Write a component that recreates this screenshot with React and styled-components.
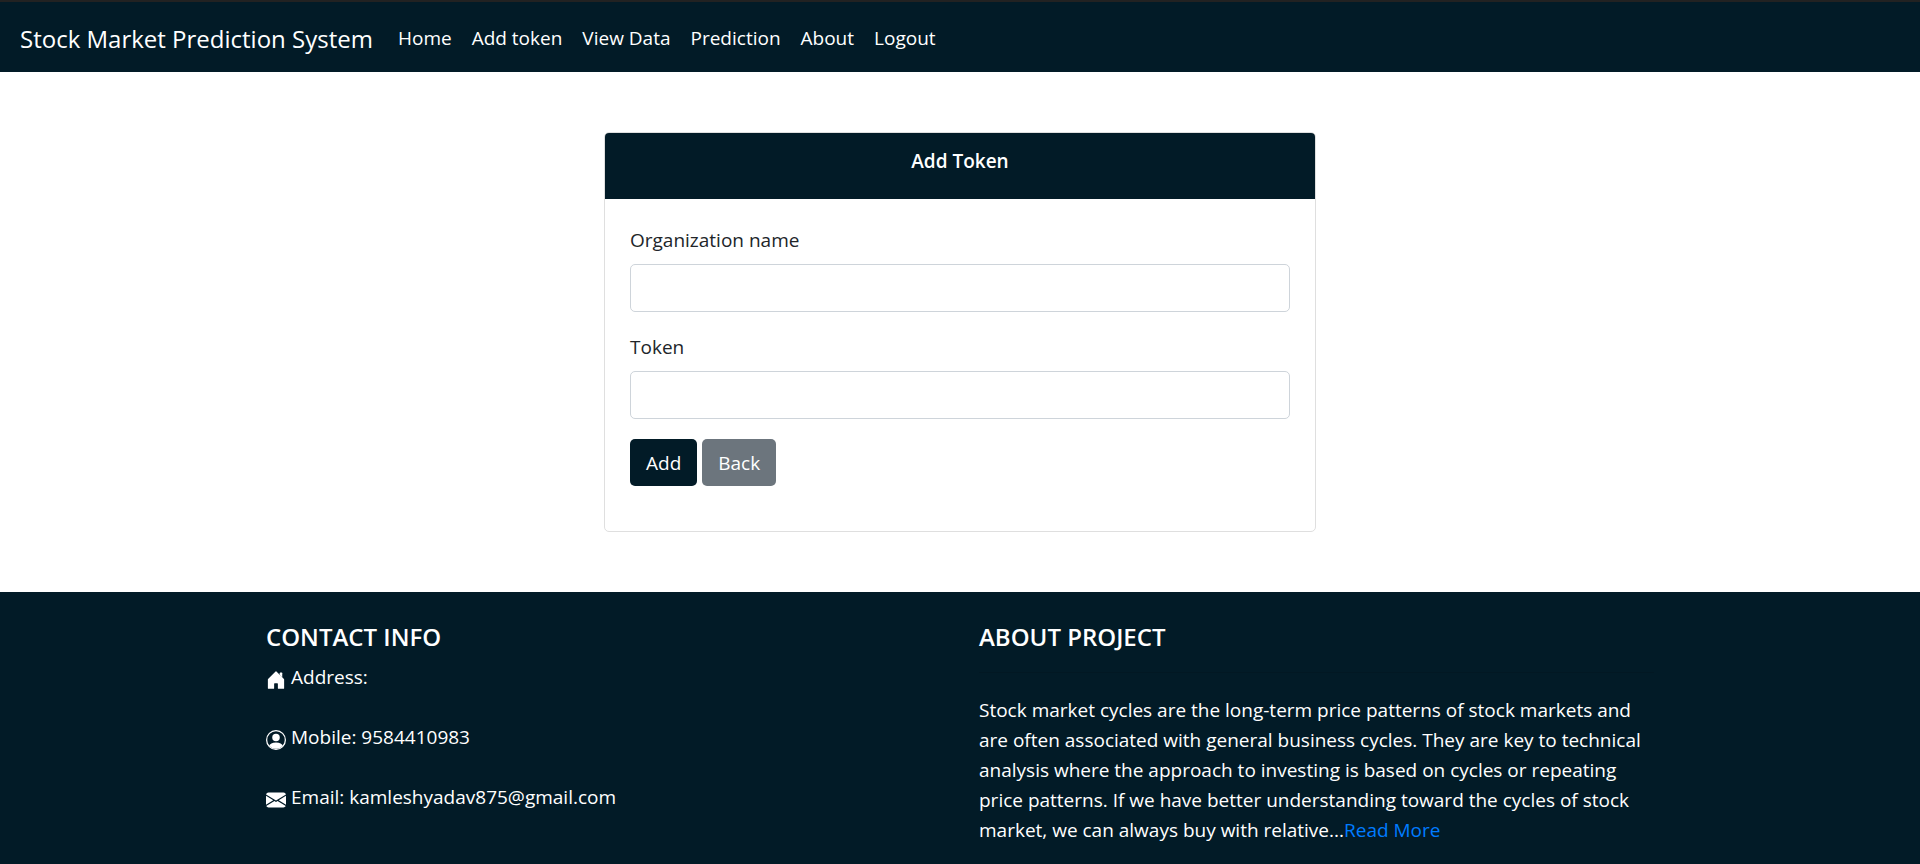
import React from "react";
import styled, { createGlobalStyle } from "styled-components";

const NAVY = "#021b27";

const GlobalStyle = createGlobalStyle`
  *, *::before, *::after { box-sizing: border-box; }
  body {
    margin: 0;
    background: #fff;
    color: #212529;
    font-family: "Segoe UI", "Open Sans", "Noto Sans", sans-serif;
    font-size: 19px;
    line-height: 30px;
  }
`;

const Page = styled.div`
  display: flex;
  flex-direction: column;
  min-height: 100vh;
`;

const Navbar = styled.nav`
  display: flex;
  align-items: center;
  padding: 12px 20px 8px;
  border-top: 2px solid #222;
  background: ${NAVY};
`;

const Brand = styled.a`
  margin-right: 15px;
  color: #fff;
  font-size: 24px;
  line-height: 36px;
  text-decoration: none;
`;

const NavList = styled.ul`
  display: flex;
  margin: 0;
  padding: 0;
  list-style: none;
`;

const NavLink = styled.a`
  display: block;
  padding: 9px 10px 11px;
  color: #fff;
  text-decoration: none;
`;

const Container = styled.div`
  width: 100%;
  max-width: 1426px;
  margin: 0 auto;
  padding: 0 19px;
`;

const Main = styled.main`
  display: flex;
  justify-content: center;
  padding: 60px 19px;
`;

const Card = styled.section`
  width: 100%;
  max-width: 712px;
  border: 1px solid #dfdfdf;
  border-radius: 5px;
  overflow: hidden;
`;

const CardHeader = styled.h1`
  margin: 0;
  padding: 13px 25px 23px;
  background: ${NAVY};
  color: #fff;
  font-size: 19px;
  font-weight: 600;
  line-height: 30px;
  text-align: center;
`;

const Form = styled.form`
  padding: 26px 25px 45px;
`;

const Field = styled.div`
  margin-bottom: 20px;
`;

const Label = styled.label`
  display: block;
  margin-bottom: 9px;
`;

const Input = styled.input`
  display: block;
  width: 100%;
  height: 48px;
  padding: 8px 15px;
  border: 1px solid #ced4da;
  border-radius: 5px;
  background: #fff;
  color: #495057;
  font: inherit;
`;

const Actions = styled.div`
  display: flex;
  gap: 5px;
`;

const Button = styled.button`
  height: 47px;
  padding: 8px 16px;
  border: 0;
  border-radius: 5px;
  background: ${(p) => (p.$secondary ? "#6c757d" : NAVY)};
  color: #fff;
  font: inherit;
  cursor: pointer;
`;

const Footer = styled.footer`
  flex: 1;
  padding: 30px 0 16px;
  background: ${NAVY};
  color: #fff;
`;

const Columns = styled(Container)`
  display: grid;
  grid-template-columns: 1fr 1fr;
  gap: 38px;
`;

const FooterTitle = styled.h2`
  margin: 0 0 10px;
  font-size: 24px;
  font-weight: 600;
  line-height: 30px;
`;

const ContactList = styled.address`
  display: flex;
  flex-direction: column;
  gap: 30px;
  font-style: normal;
`;

const ContactItem = styled.div`
  display: flex;
  gap: 5px;
`;

const Icon = styled.svg`
  flex: none;
  width: 20px;
  height: 20px;
  margin-top: 8px;
`;

const Rule = styled.hr`
  margin: 20px 0 22px;
  border: 0;
  border-top: 1px solid #021823;
`;

const Text = styled.p`
  margin: 0;
`;

const ReadMore = styled.a`
  color: #007bff;
  text-decoration: none;
`;

const icons = {
  house: [
    "M6.5 10.995V14.5a.5.5 0 0 1-.5.5H2a.5.5 0 0 1-.5-.5v-7a.5.5 0 0 1 .146-.354l6-6a.5.5 0 0 1 .708 0l6 6a.5.5 0 0 1 .146.354v7a.5.5 0 0 1-.5.5h-4a.5.5 0 0 1-.5-.5V11c0-.25-.25-.5-.5-.5H7c-.25 0-.5.25-.5.495z",
    "M13 2.5V6l-2-2V2.5a.5.5 0 0 1 .5-.5h1a.5.5 0 0 1 .5.5z",
  ],
  person: [
    "M13.468 12.37C12.758 11.226 11.195 10 8 10s-4.757 1.225-5.468 2.37A6.987 6.987 0 0 0 8 15a6.987 6.987 0 0 0 5.468-2.63z",
    "M8 9a3 3 0 1 0 0-6 3 3 0 0 0 0 6z",
    "M8 1a7 7 0 1 0 0 14A7 7 0 0 0 8 1zM0 8a8 8 0 1 1 16 0A8 8 0 0 1 0 8z",
  ],
  envelope: [
    "M.05 3.555A2 2 0 0 1 2 2h12a2 2 0 0 1 1.95 1.555L8 8.414.05 3.555zM0 4.697v7.104l5.803-3.558L0 4.697zM6.761 8.83l-6.57 4.027A2 2 0 0 0 2 14h12a2 2 0 0 0 1.808-1.144l-6.57-4.027L8 9.586l-1.239-.757zm3.436-.586L16 11.801V4.697l-5.803 3.546z",
  ],
};

const links = ["Home", "Add token", "View Data", "Prediction", "About", "Logout"];

const contacts = [
  { icon: "house", text: "Address:" },
  { icon: "person", text: "Mobile: 9584410983" },
  { icon: "envelope", text: "Email: kamleshyadav875@gmail.com" },
];

export default function App() {
  return (
    <Page>
      <GlobalStyle />
      <Navbar>
        <Brand href="#">Stock Market Prediction System</Brand>
        <NavList>
          {links.map((name) => (
            <li key={name}>
              <NavLink href="#">{name}</NavLink>
            </li>
          ))}
        </NavList>
      </Navbar>

      <Main>
        <Card>
          <CardHeader>Add Token</CardHeader>
          <Form onSubmit={(e) => e.preventDefault()}>
            <Field>
              <Label htmlFor="organization">Organization name</Label>
              <Input id="organization" type="text" />
            </Field>
            <Field>
              <Label htmlFor="token">Token</Label>
              <Input id="token" type="text" />
            </Field>
            <Actions>
              <Button type="submit">Add</Button>
              <Button type="button" $secondary>Back</Button>
            </Actions>
          </Form>
        </Card>
      </Main>

      <Footer>
        <Columns>
          <section>
            <FooterTitle>CONTACT INFO</FooterTitle>
            <ContactList>
              {contacts.map(({ icon, text }) => (
                <ContactItem key={icon}>
                  <Icon viewBox="0 0 16 16" fill="currentColor" aria-hidden="true">
                    {icons[icon].map((d) => (
                      <path key={d} d={d} fillRule="evenodd" />
                    ))}
                  </Icon>
                  {text}
                </ContactItem>
              ))}
            </ContactList>
          </section>
          <section>
            <FooterTitle>ABOUT PROJECT</FooterTitle>
            <Rule />
            <Text>
              Stock market cycles are the long-term price patterns of stock markets and are often
              associated with general business cycles. They are key to technical analysis where the
              approach to investing is based on cycles or repeating price patterns. If we have better
              understanding toward the cycles of stock market, we can always buy with relative...
              <ReadMore href="#">Read More</ReadMore>
            </Text>
          </section>
        </Columns>
      </Footer>
    </Page>
  );
}
